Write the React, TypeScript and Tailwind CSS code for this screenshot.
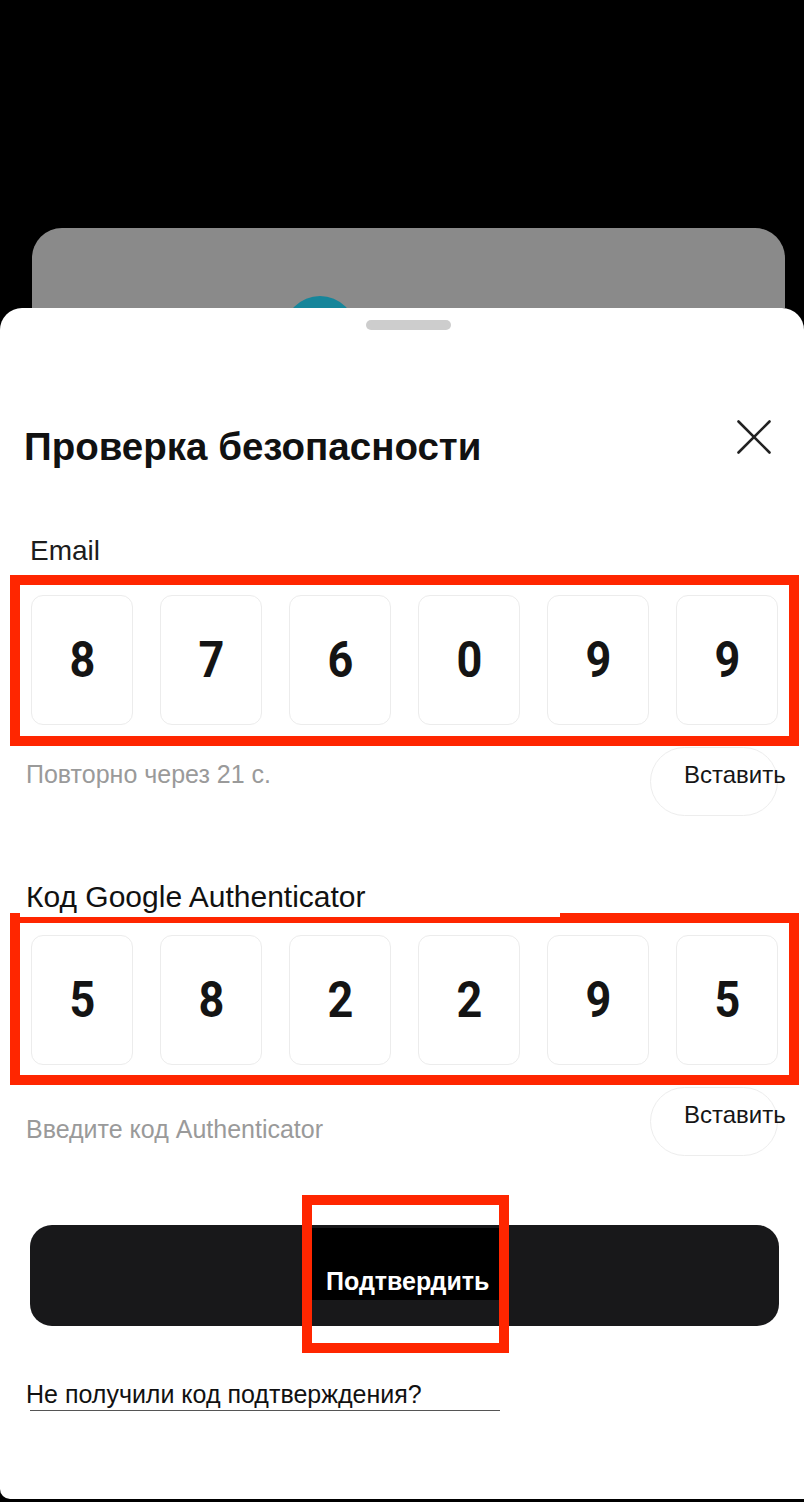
const emailCode = ['8', '7', '6', '0', '9', '9'];
const authCode = ['5', '8', '2', '2', '9', '5'];

const sans = { fontFamily: '"Liberation Sans", Arial, sans-serif' };

function CodeRow({ digits, padTop, padBottom }: { digits: string[]; padTop: string; padBottom: string }) {
    return (
        <div className={`ml-[10px] mr-[5px] border-[10px] border-[#ff2600] px-[11px] ${padTop} ${padBottom} flex justify-between`}>
            {digits.map((d, i) => (
                <div
                    key={i}
                    className="w-[102px] h-[130px] rounded-[12px] border border-[#ececec] bg-white flex items-center justify-center"
                >
                    <span
                        className="text-[50px] leading-none font-bold text-[#141414] scale-x-90"
                        style={{ fontFamily: 'Roboto, sans-serif' }}
                    >
                        {d}
                    </span>
                </div>
            ))}
        </div>
    );
}

function PasteButton({ textTop }: { textTop: string }) {
    return (
        <div className="w-[128px] h-[69px] rounded-full border border-[#ededed] mr-[26px]">
            <div className={`pl-[33px] ${textTop} whitespace-nowrap text-[24px] leading-[28px] text-[#151515]`}>Вставить</div>
        </div>
    );
}

export default function App() {
    return (
        <div className="w-[804px] h-[1502px] bg-black overflow-hidden" style={sans}>
            {/* backdrop card behind the sheet */}
            <div className="h-[308px] overflow-hidden pt-[228px] pl-[32px] pr-[19px]">
                <div className="h-[120px] rounded-t-[30px] bg-[#8a8a8a] pt-[68px] pl-[252px]">
                    <div className="w-[72px] h-[72px] rounded-full bg-[#16859a]" />
                </div>
            </div>

            {/* bottom sheet */}
            <div className="relative h-[1191px] bg-white rounded-t-[22px] rounded-bl-[10px] pt-[12px]">
                <div className="ml-[366px] w-[85px] h-[10px] rounded-full bg-[#cdcdcd]" />

                <div className="mt-[90px] flex justify-between items-start pl-[24px] pr-[33px]">
                    <h2 className="mt-[5px] text-[38.5px] leading-[44px] font-bold text-[#111]">Проверка безопасности</h2>
                    <svg width="34" height="34" viewBox="0 0 34 34" className="text-[#222]">
                        <path d="M1.5 1.5 L32.5 32.5 M32.5 1.5 L1.5 32.5" stroke="currentColor" strokeWidth="2.6" strokeLinecap="round" />
                    </svg>
                </div>

                <div className="mt-[66px] ml-[30px] text-[28px] leading-[32px] text-[#1c1c1c]">Email</div>

                <div className="mt-[8px]">
                    <CodeRow digits={emailCode} padTop="pt-[10px]" padBottom="pb-[11px]" />
                </div>

                <div className="flex justify-between items-start">
                    <div className="ml-[26px] mt-[14px] text-[25px] leading-[28px] text-[#9a9a9a]">Повторно через 21 с.</div>
                    <div className="mt-[1px]">
                        <PasteButton textTop="pt-[13px]" />
                    </div>
                </div>

                <div className="relative z-10 mt-[65px] ml-[20px] w-[540px] h-[36px] bg-white pl-[6px] text-[30px] leading-[32px] text-[#111]">
                    Код Google Authenticator
                </div>
                <div className="-mt-[4px]">
                    <CodeRow digits={authCode} padTop="pt-[12px]" padBottom="pb-[10px]" />
                </div>

                <div className="flex justify-between items-start">
                    <div className="ml-[26px] mt-[30px] text-[25px] leading-[28px] text-[#9a9a9a]">Введите код Authenticator</div>
                    <div className="mt-[2px]">
                        <PasteButton textTop="pt-[13px]" />
                    </div>
                </div>

                <div className="relative mt-[69px] ml-[30px] mr-[25px] h-[101px] rounded-[22px] bg-[#18181a]">
                    <div className="absolute left-[280px] top-[3px] w-[196px] h-[72px] bg-black pl-[16px] pt-[39px]">
                        <span className="text-[25px] leading-[28px] font-bold text-white whitespace-nowrap">Подтвердить</span>
                    </div>
                    <div className="absolute left-[272px] -top-[30px] w-[207px] h-[158px] border-[10px] border-[#ff2600]" />
                </div>

                <div className="mt-[54px] ml-[26px] text-[25px] leading-[28px] text-[#111]">Не получили код подтверждения?</div>
                <div className="mt-[2px] ml-[30px] w-[470px] h-px bg-[#555]" />
            </div>
        </div>
    );
}
